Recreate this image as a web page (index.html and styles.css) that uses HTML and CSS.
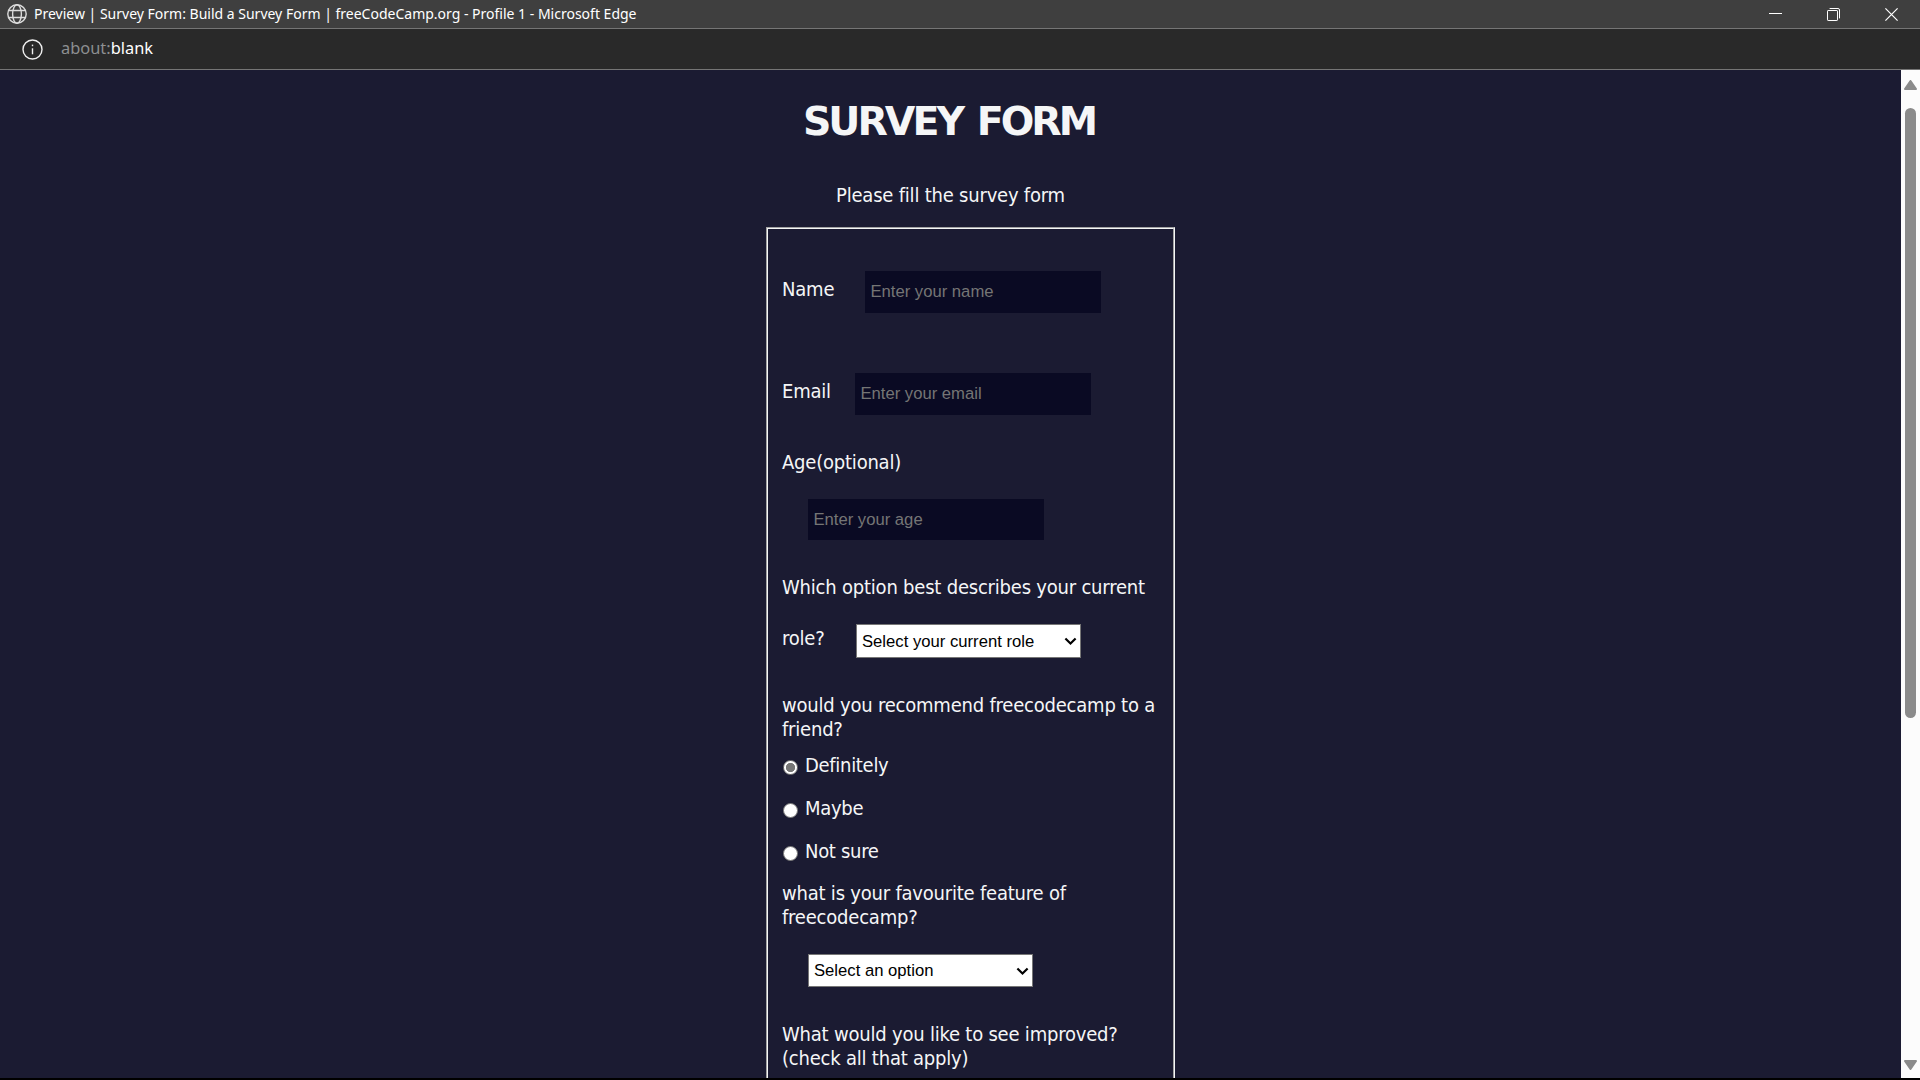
FILE: index.html
```
<!DOCTYPE html>
<html lang="en">
<head>
<meta charset="utf-8">
<title>Survey Form</title>
<link rel="stylesheet" href="styles.css">
</head>
<body>
<header class="titlebar">
  <svg class="globe" width="20" height="20" viewBox="0 0 20 20" fill="none" stroke="#dcdcdc" stroke-width="1.4"><circle cx="10" cy="10" r="9.2"/><ellipse cx="10" cy="10" rx="4.4" ry="9.2"/><path d="M1.5 6.5h17M1.5 13.5h17"/></svg>
  <span class="window-title">Preview | Survey Form: Build a Survey Form | freeCodeCamp.org - Profile 1 - Microsoft Edge</span>
  <div class="window-buttons">
    <svg width="13" height="13" viewBox="0 0 13 13" fill="none" stroke="#fff"><path d="M0 5.5h13"/></svg>
    <svg width="13" height="13" viewBox="0 0 13 13" fill="none" stroke="#fff"><rect x=".5" y="2.5" width="10" height="10" rx=".6"/><path d="M2.6.5H11a1.5 1.5 0 0 1 1.5 1.5v8.4"/></svg>
    <svg width="13" height="13" viewBox="0 0 13 13" fill="none" stroke="#fff" stroke-width="1.2"><path d="M.4.4l12.2 12.2M12.6.4L.4 12.6"/></svg>
  </div>
</header>
<div class="addressbar">
  <svg width="21" height="21" viewBox="0 0 21 21" fill="none" stroke="#f0f0f0" stroke-width="1.4"><circle cx="10.5" cy="10.5" r="9.5"/><path d="M10.5 9.3v6"/><path d="M10.5 5.6v1.6"/></svg>
  <span class="url"><span class="scheme">about:</span>blank</span>
</div>
<div class="viewport">
  <main class="page">
    <h1>SURVEY FORM</h1>
    <p class="intro">Please fill the survey form</p>
    <form class="survey">
      <div class="row name-row"><label for="name">Name</label><input id="name" type="text" placeholder="Enter your name"></div>
      <div class="row email-row"><label for="email">Email</label><input id="email" type="text" placeholder="Enter your email"></div>
      <label class="question" for="age">Age(optional)</label>
      <input id="age" class="indented" type="text" placeholder="Enter your age">
      <label class="question" for="role">Which option best describes your current</label>
      <div class="row role-row">
        <label for="role">role?</label>
        <div class="select">
          <select id="role"><option>Select your current role</option></select>
          <svg class="chevron" width="13" height="9" viewBox="0 0 13 9" fill="none" stroke="#000" stroke-width="2.2"><path d="M1.4 1.5l5.1 5 5.1-5"/></svg>
        </div>
      </div>
      <p class="question">would you recommend freecodecamp to a<br>friend?</p>
      <div class="choices">
        <label><input type="radio" name="recommend" checked>Definitely</label>
        <label><input type="radio" name="recommend">Maybe</label>
        <label><input type="radio" name="recommend">Not sure</label>
      </div>
      <label class="question feature" for="feature">what is your favourite feature of<br>freecodecamp?</label>
      <div class="select indented">
        <select id="feature"><option>Select an option</option></select>
        <svg class="chevron" width="13" height="9" viewBox="0 0 13 9" fill="none" stroke="#000" stroke-width="2.2"><path d="M1.4 1.5l5.1 5 5.1-5"/></svg>
      </div>
      <p class="question">What would you like to see improved?<br>(check all that apply)</p>
    </form>
  </main>
  <div class="scrollbar">
    <svg width="13" height="10" viewBox="0 0 13 10"><path d="M6.5 1L12 9H1z" fill="#8b8b8b" stroke="#8b8b8b" stroke-width="2" stroke-linejoin="round"/></svg>
    <div class="thumb"></div>
    <svg class="down" width="13" height="10" viewBox="0 0 13 10"><path d="M6.5 9L12 1H1z" fill="#8b8b8b" stroke="#8b8b8b" stroke-width="2" stroke-linejoin="round"/></svg>
  </div>
</div>
</body>
</html>
```
FILE: styles.css
```
* { box-sizing: border-box; }
body {
  margin: 0;
  height: 1080px;
  overflow: hidden;
  background: #000;
  display: flex;
  flex-direction: column;
}
svg { display: block; flex: none; }
h1, p { margin: 0; }

.titlebar {
  height: 28px;
  background: #3f3f3f;
  display: flex;
  align-items: center;
  padding: 0 22px 0 7px;
  color: #fff;
  font: 14px/28px "Noto Sans", sans-serif;
}
.window-title { margin-left: 7px; white-space: pre; }
.window-buttons { margin-left: auto; display: flex; gap: 45px; }

.addressbar {
  height: 42px;
  background: #292929;
  border: 1px solid #757575;
  border-width: 1px 0;
  display: flex;
  align-items: center;
  gap: 18px;
  padding-left: 22px;
  color: #fff;
  font: 16.4px/40px "Noto Sans", sans-serif;
}
.url { margin-top: -2px; }
.scheme { color: #8d8f91; }

.viewport { height: 1008px; display: flex; overflow: hidden; }
.page {
  flex: 1;
  background: #1b1b32;
  color: #f5f6f7;
  font: 20px/24px "DejaVu Sans Condensed", Tahoma, sans-serif;
  letter-spacing: -.21px;
}
h1 {
  margin-top: 27px;
  text-align: center;
  text-indent: -3px;
  font-family: "DejaVu Sans", Tahoma, sans-serif;
  font-size: 39.5px;
  line-height: 48px;
  letter-spacing: -3px;
  word-spacing: 4px;
}
.intro { margin-top: 38px; text-align: center; }

.survey {
  width: 409px;
  height: 1300px;
  margin: 20px 0 0 766px;
  padding: 42px 0 0 14px;
  border: 2px groove #f5f6f7;
  display: flex;
  flex-direction: column;
  align-items: flex-start;
}
.row { display: flex; align-items: flex-start; }
.name-row label { width: 83px; margin-top: 6px; }
.email-row { margin-top: 60px; }
.email-row label { width: 73px; margin-top: 6px; }
.role-row { margin-top: 25px; }
.role-row label { width: 74px; margin-top: 2px; }
.question { margin-top: 35px; }
.question.feature { margin-top: 18px; }
.indented { margin: 25px 0 0 26px; }

input[type="text"] {
  width: 236px;
  height: 42px;
  border: 0;
  padding: 0 5.4px;
  background: #0a0a23;
  color: #f5f6f7;
  font: 16.67px "Liberation Sans", Arial, sans-serif;
}
input[type="text"]::placeholder { color: #757575; }
#age { height: 41px; }

.select { position: relative; }
select {
  display: block;
  appearance: none;
  width: 225px;
  height: 34px;
  border: 1px solid #767676;
  border-radius: 0;
  padding: 0 5px;
  background: #fff;
  color: #000;
  font: 16.67px "Liberation Sans", Arial, sans-serif;
}
#feature { height: 33px; }
.chevron { position: absolute; right: 4px; top: 13px; pointer-events: none; }

.choices { margin-top: 12px; padding-left: 1px; display: flex; flex-direction: column; gap: 19px; }
.choices label { display: flex; align-items: center; gap: 7px; letter-spacing: -.3px; }
.choices input {
  appearance: none;
  width: 15px;
  height: 15px;
  margin: 4px 0 0;
  border: 1px solid #767676;
  border-radius: 50%;
  background: #fff;
}
.choices input:checked { background: radial-gradient(circle, #767676 4.3px, #fff 5px); }

.scrollbar {
  width: 19px;
  background: #fcfcfc;
  display: flex;
  flex-direction: column;
  align-items: center;
  padding: 10px 0 8px;
}
.thumb { width: 11px; height: 610px; margin-top: 18px; border-radius: 6px; background: #8b8b8b; }
.down { margin-top: auto; }
```
